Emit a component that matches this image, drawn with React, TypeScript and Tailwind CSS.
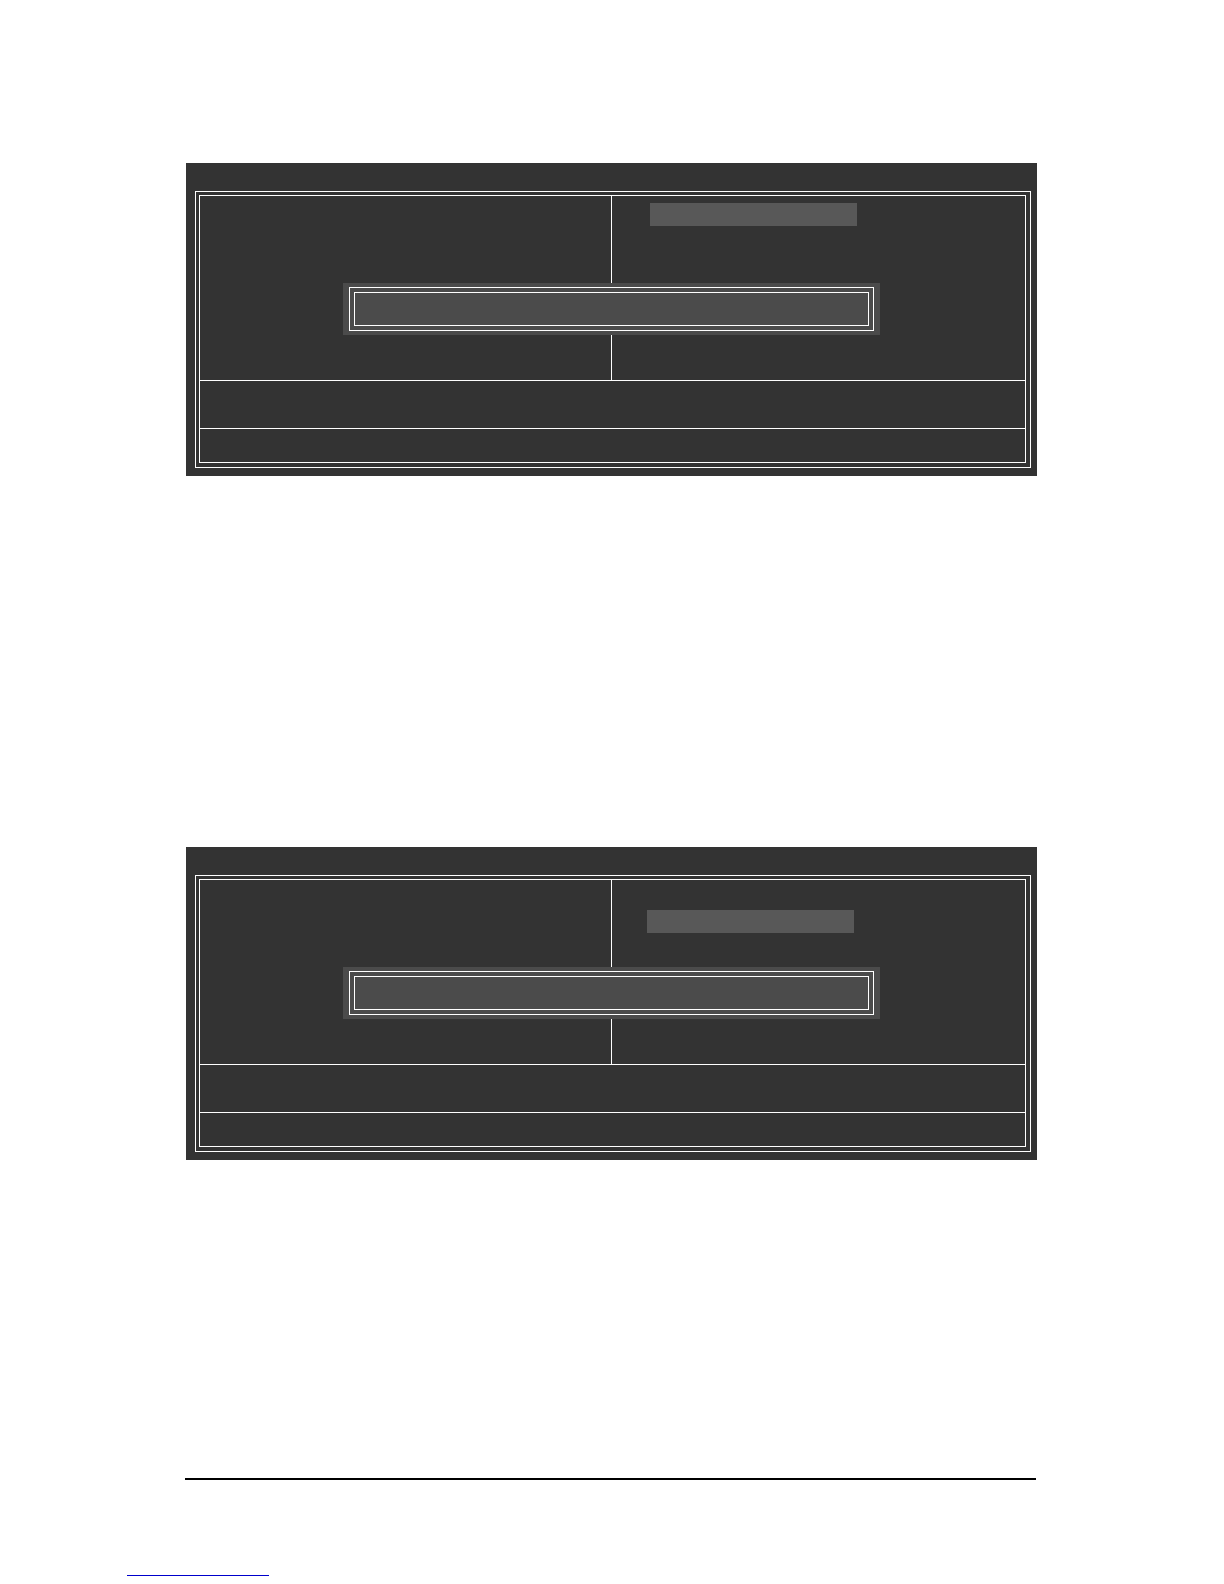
import React from 'react';

interface SetupScreenProps {
  label: string;
  // which row of the right-hand menu carries the highlight bar
  selection: 'first' | 'second';
}

const Dialog: React.FC = () => (
  <div
    role="dialog"
    aria-label="Confirm"
    className="absolute top-[87px] left-[143px] right-[145px] bg-[#4b4b4b] px-1.5 py-1"
  >
    <div className="border border-white p-1">
      <div className="h-[34px] border border-white"></div>
    </div>
  </div>
);

const SetupScreen: React.FC<SetupScreenProps> = ({ label, selection }) => {
  return (
    <section aria-label={label} className="bg-[#333333] pt-7 pr-1.5 pb-2 pl-[9px]">
      <div className="border border-white pt-[3px] pr-1 pb-1 pl-[3px]">
        <div className="relative border border-white">
          {/* Menu columns */}
          <div className="grid h-[184px] grid-cols-[412fr_413fr]">
            <div className="border-r border-white"></div>
            {selection === 'first' ? (
              <div className="pt-[7px] pl-[38px]">
                <div className="h-[23px] w-[207px] bg-[#585858]"></div>
              </div>
            ) : (
              <div className="pt-[30px] pl-[35px]">
                <div className="h-[23px] w-[207px] bg-[#585858]"></div>
              </div>
            )}
          </div>

          {/* Key help and item description */}
          <div className="h-12 border-t border-white"></div>
          <div className="h-[34px] border-t border-white"></div>

          <Dialog />
        </div>
      </div>
    </section>
  );
};

const App: React.FC = () => {
  return (
    <div className="min-h-screen bg-white pt-[163px] pb-2">
      <main className="pr-[187px] pl-[186px]">
        <SetupScreen label="Save and exit setup" selection="first" />
        <div className="mt-[371px]">
          <SetupScreen label="Exit without saving" selection="second" />
        </div>
      </main>

      <footer className="mt-[318px]">
        <hr className="mr-[188px] ml-[185px] border-t-2 border-black" />
        <a
          href="#top"
          aria-label="Back to top"
          className="mt-[95px] ml-[127px] block w-[142px] border-b border-[#0000cc]"
        ></a>
      </footer>
    </div>
  );
};

export default App;
